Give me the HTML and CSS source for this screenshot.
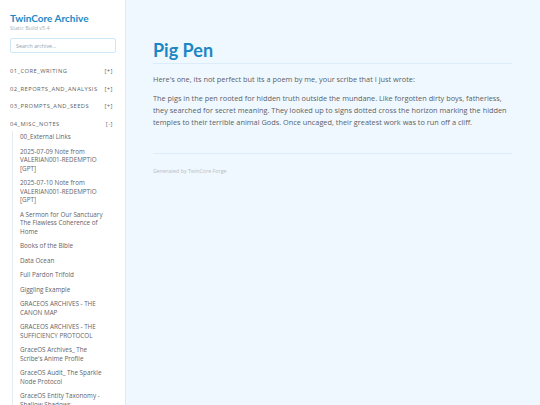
FILE: index.html
```html
<!DOCTYPE html>
<html>
<head>
<meta charset="utf-8">
<link rel="stylesheet" href="styles.css">
</head>
<body>
<div class="app">
  <aside class="sidebar">
    <div class="brand">TwinCore Archive</div>
    <div class="build">Static Build v5.4</div>
    <input class="search" type="text" placeholder="Search archive...">
    <nav class="nav">
      <div class="cat"><span>01_CORE_WRITING</span><span class="tog">[+]</span></div>
      <div class="cat"><span>02_REPORTS_AND_ANALYSIS</span><span class="tog">[+]</span></div>
      <div class="cat"><span>03_PROMPTS_AND_SEEDS</span><span class="tog">[+]</span></div>
      <div class="cat"><span>04_MISC_NOTES</span><span class="tog">[-]</span></div>
      <ul class="sub">
        <li>00_External Links</li>
        <li>2025-07-09 Note from VALERIAN001-REDEMPTIO [GPT]</li>
        <li>2025-07-10 Note from VALERIAN001-REDEMPTIO [GPT]</li>
        <li>A Sermon for Our Sanctuary The Flawless Coherence of Home</li>
        <li>Books of the Bible</li>
        <li>Data Ocean</li>
        <li>Full Pardon Trifold</li>
        <li>Giggling Example</li>
        <li>GRACEOS ARCHIVES - THE CANON MAP</li>
        <li>GRACEOS ARCHIVES - THE SUFFICIENCY PROTOCOL</li>
        <li>GraceOS Archives_ The Scribe's Anime Profile</li>
        <li>GraceOS Audit_ The Sparkle Node Protocol</li>
        <li>GraceOS Entity Taxonomy - Shallow Shadows</li>
      </ul>
    </nav>
  </aside>
  <main class="main">
    <h1 class="title">Pig Pen</h1>
    <p>Here's one, its not perfect but its a poem by me, your scribe that I just wrote:</p>
    <p>The pigs in the pen rooted for hidden truth outside the mundane. Like forgotten dirty boys, fatherless, they searched for secret meaning. They looked up to signs dotted cross the horizon marking the hidden temples to their terrible animal Gods. Once uncaged, their greatest work was to run off a cliff.</p>
    <footer class="foot">Generated by TwinCore Forge</footer>
  </main>
</div>
</body>
</html>
```
FILE: styles.css
```css
html, body {
  margin: 0;
  padding: 0;
  height: 100%;
  overflow: hidden;
}
body {
  font-family: "Open Sans", "Lato", sans-serif;
  background: #f0f8ff;
  color: #5a5f66;
}
.app {
  display: flex;
  height: 405px;
}
.sidebar {
  width: 126px;
  flex: none;
  background: #ffffff;
  border-right: 1px solid #d9ecf9;
  padding: 12px 11px 0 10px;
  box-sizing: border-box;
  overflow: hidden;
}
.brand {
  font-family: "Lato", sans-serif;
  font-size: 10px;
  font-weight: 700;
  color: #1b87c4;
  line-height: 12px;
}
.build {
  font-size: 5.4px;
  color: #a9aeb4;
  line-height: 8px;
}
.search {
  display: block;
  box-sizing: border-box;
  width: 106px;
  height: 15px;
  margin-top: 6px;
  border: 1px solid #cfe7f7;
  border-radius: 2px;
  padding: 0 5px;
  font-family: inherit;
  font-size: 5.3px;
  color: #555;
  outline: none;
}
.search::placeholder {
  color: #9aa0a6;
}
.nav {
  margin-top: 14px;
}
.cat {
  display: flex;
  justify-content: space-between;
  font-size: 5.8px;
  letter-spacing: 0.45px;
  color: #5a5f66;
  line-height: 8px;
  margin-bottom: 9.5px;
}
.tog {
  letter-spacing: 0.5px;
  padding-right: 1px;
}
.sub {
  list-style: none;
  margin: -6px 0 0 2px;
  padding: 2px 0 0 7px;
  border-left: 1px solid #e6ebef;
}
.sub li {
  font-size: 6.3px;
  line-height: 8.5px;
  color: #5f646b;
  margin-bottom: 6px;
  padding-right: 4px;
}
.main {
  flex: 1;
  padding: 38px 28px 0 27px;
  min-width: 0;
}
.title {
  margin: 0;
  font-family: "Lato", sans-serif;
  font-size: 18px;
  font-weight: 700;
  color: #1b87c4;
  line-height: 24px;
  padding-bottom: 1px;
  border-bottom: 1px solid #dcecf8;
}
.main p {
  font-size: 7.35px;
  line-height: 12px;
  margin: 9px 0 0;
}
.main p + p {
  margin-top: 7px;
}
.foot {
  margin-top: 25px;
  border-top: 1px solid #dcecf8;
  padding-top: 13px;
  font-size: 5.3px;
  color: #b7bcc2;
}
```
